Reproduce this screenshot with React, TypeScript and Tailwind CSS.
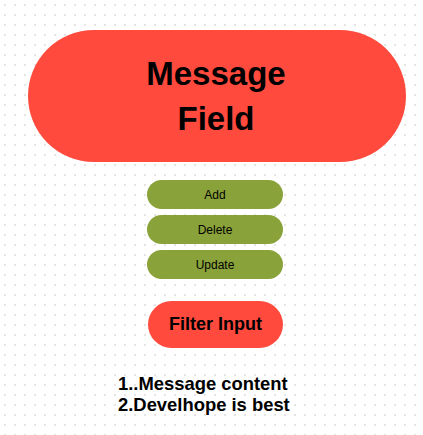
const actions = ["Add", "Delete", "Update"];
const messages = [".Message content", "Develhope is best"];

export default function App() {
  return (
    <div
      className="min-h-[435px] w-full bg-white bg-[radial-gradient(#e4e4e4_1px,transparent_1.2px)] bg-[size:10px_10px] pt-[30px] pb-4 text-black"
      style={{ fontFamily: '"Liberation Sans", Arial, sans-serif' }}
    >
      <div className="ml-[28px] flex h-[132px] w-[378px] items-center justify-center rounded-full bg-[#ff4a3d]">
        <h1 className="pr-[2px] text-center text-[33px] font-bold leading-[45px]">
          Message
          <br />
          Field
        </h1>
      </div>

      <div className="ml-[147px] mt-[18px] flex w-[136px] flex-col gap-[6px]">
        {actions.map((a) => (
          <button
            key={a}
            className="h-[29px] w-full rounded-full bg-[#8aa23a] text-[12px] text-black"
          >
            {a}
          </button>
        ))}
      </div>

      <button className="ml-[148px] mt-[22px] flex h-[47px] w-[135px] items-center justify-center rounded-full bg-[#ff4a3d] text-[18px] font-bold">
        Filter Input
      </button>

      <ol className="ml-[118px] mt-[25px] text-[18.4px] font-bold leading-[21px]">
        {messages.map((m, i) => (
          <li key={i}>
            {i + 1}.{m}
          </li>
        ))}
      </ol>
    </div>
  );
}
